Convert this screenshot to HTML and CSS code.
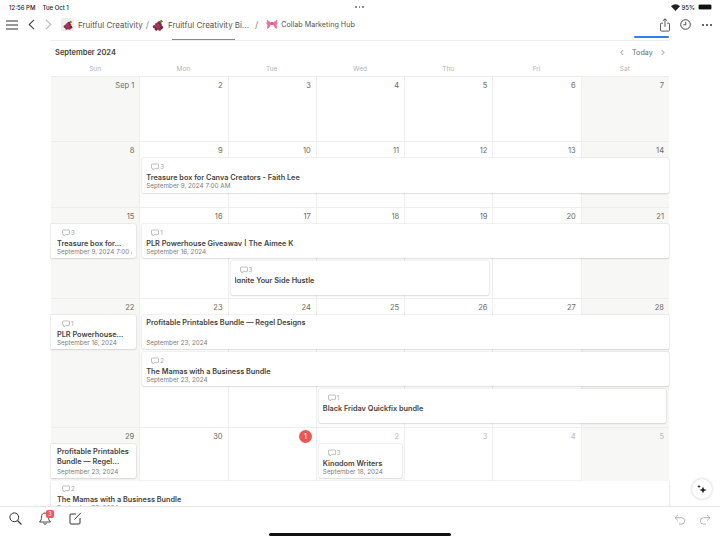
FILE: index.html
```html
<!DOCTYPE html>
<html lang="en">
<head>
    <meta charset="UTF-8">
    <meta name="viewport" content="width=device-width, initial-scale=1.0">
    <title>September 2024 Calendar</title>
    <link rel="stylesheet" href="styles.css">
</head>
<body>
    <svg class="defs" width="0" height="0">
        <symbol id="grapes" viewBox="0 0 14 14">
            <path d="M8 3 L11 1 L13 3 L10 5 Z" fill="#6d8a3c"/>
            <circle cx="8" cy="4.5" r="2" fill="#8e2748"/>
            <circle cx="5.5" cy="6.5" r="2.1" fill="#a52f55"/>
            <circle cx="9.5" cy="7" r="2.2" fill="#8e2748"/>
            <circle cx="3" cy="9" r="2.1" fill="#8e2748"/>
            <circle cx="7" cy="9.5" r="2.2" fill="#a52f55"/>
            <circle cx="11" cy="10" r="2" fill="#7c1f3e"/>
            <circle cx="5" cy="12" r="1.7" fill="#7c1f3e"/>
            <circle cx="9" cy="12" r="1.8" fill="#8e2748"/>
        </symbol>
        <symbol id="comment" viewBox="0 0 8 8">
            <path d="M1.2 1h5.6a.7.7 0 0 1 .7.7v3.2a.7.7 0 0 1-.7.7H3.6L2 7V5.6h-.8a.7.7 0 0 1-.7-.7V1.700a.7.7 0 0 1 .7-.7z" fill="none" stroke="#a5a5a2" stroke-width=".7"/>
        </symbol>
    </svg>

    <div class="status-bar">
        <span class="clock">12:56 PM</span>
        <span>Tue Oct 1</span>
        <span class="status-dots"><i></i><i></i><i></i></span>
        <svg class="wifi" width="9" height="7" viewBox="0 0 9 7"><path d="M0 2.300C2.500-.4 6.500-.4 9 2.300L4.500 7z" fill="#222"/></svg>
        <span>95%</span>
        <span class="battery"><i></i></span>
    </div>

    <nav class="top-bar">
        <svg class="menu-icon" width="12" height="10" viewBox="0 0 12 10"><path d="M0 1h12M0 5h12M0 9h12" stroke="#333" stroke-width="1.1"/></svg>
        <svg class="back-icon" width="7" height="11" viewBox="0 0 7 11"><path d="M6 .8 1.200 5.500 6 10.200" fill="none" stroke="#444" stroke-width="1.100"/></svg>
        <svg class="forward-icon" width="7" height="11" viewBox="0 0 7 11"><path d="M1 .8 5.800 5.500 1 10.200" fill="none" stroke="#bbb" stroke-width="1.100"/></svg>
        <span class="tile"><svg width="10" height="10"><use href="#grapes"/></svg></span>
        <span class="crumb">Fruitful Creativity</span>
        <span class="slash">/</span>
        <svg class="crumb-icon" width="12" height="12"><use href="#grapes"/></svg>
        <span class="crumb">Fruitful Creativity Bi...</span>
        <span class="slash slash-wide">/</span>
        <svg class="bow" width="12" height="11" viewBox="0 0 12 11">
            <path d="M5.500 4 1 .8.500 5l1 1L.8 10l2.400-1.200L5 5.500zM6.500 4 11 .8l.5 4.200-1 1 .7 4-2.400-1.200L7 5.500z" fill="#ee6fa0"/>
            <rect x="4.800" y="3" width="2.400" height="3" rx="1" fill="#d94f86"/>
        </svg>
        <span class="crumb crumb-small">Collab Marketing Hub</span>
        <svg class="share-icon" width="10" height="14" viewBox="0 0 11 15"><path d="M3.200 5.500H1.500a1 1 0 0 0-1 1v6.700a1 1 0 0 0 1 1h8a1 1 0 0 0 1-1V6.500a1 1 0 0 0-1-1H7.800M5.500 9.500V.8M3 3 5.500.6 8 3" fill="none" stroke="#333" stroke-width=".9"/></svg>
        <svg class="history-icon" width="11" height="11" viewBox="0 0 11 11"><circle cx="5.500" cy="5.500" r="4.800" fill="none" stroke="#333" stroke-width=".9"/><path d="M5.800 2.800v3H3.400" fill="none" stroke="#333" stroke-width=".9"/></svg>
        <span class="more-dots"><i></i><i></i><i></i></span>
        <span class="tab-line"></span>
        <span class="sync-line"></span>
    </nav>

    <main class="board">
        <div class="calendar">
            <div class="cal-head">
                <h2>September 2024</h2>
                <div class="cal-nav"><span class="chev">&lsaquo;</span><span>Today</span><span class="chev">&rsaquo;</span></div>
            </div>
            <div class="weekdays">
                <span>Sun</span><span>Mon</span><span>Tue</span><span>Wed</span><span>Thu</span><span>Fri</span><span>Sat</span>
            </div>

            <section class="week week-one">
                <div class="day weekend">Sep 1</div><div class="day">2</div><div class="day">3</div><div class="day">4</div><div class="day">5</div><div class="day">6</div><div class="day weekend">7</div>
            </section>

            <section class="week week-two">
                <div class="day weekend">8</div><div class="day">9</div><div class="day">10</div><div class="day">11</div><div class="day">12</div><div class="day">13</div><div class="day weekend">14</div>
                <article class="card mon-to-sat row-2">
                    <div class="comments"><svg width="8" height="8"><use href="#comment"/></svg>3</div>
                    <h3>Treasure box for Canva Creators - Faith Lee</h3>
                    <p>September 9, 2024 7:00 AM</p>
                </article>
            </section>

            <section class="week week-three">
                <div class="day weekend">15</div><div class="day">16</div><div class="day">17</div><div class="day">18</div><div class="day">19</div><div class="day">20</div><div class="day weekend">21</div>
                <article class="card sun-only row-2">
                    <div class="comments"><svg width="8" height="8"><use href="#comment"/></svg>3</div>
                    <h3>Treasure box for...</h3>
                    <p>September 9, 2024 7:00 AM</p>
                </article>
                <article class="card mon-to-sat row-2">
                    <div class="comments"><svg width="8" height="8"><use href="#comment"/></svg>1</div>
                    <h3>PLR Powerhouse Giveaway | The Aimee K</h3>
                    <p>September 16, 2024</p>
                </article>
                <article class="card tue-to-thu row-4">
                    <div class="comments"><svg width="8" height="8"><use href="#comment"/></svg>3</div>
                    <h3>Ignite Your Side Hustle</h3>
                </article>
            </section>

            <section class="week week-four">
                <div class="day weekend">22</div><div class="day">23</div><div class="day">24</div><div class="day">25</div><div class="day">26</div><div class="day">27</div><div class="day weekend">28</div>
                <article class="card sun-only row-2">
                    <div class="comments"><svg width="8" height="8"><use href="#comment"/></svg>1</div>
                    <h3>PLR Powerhouse...</h3>
                    <p>September 16, 2024</p>
                </article>
                <article class="card mon-to-sat row-2">
                    <h3 class="full-title">Profitable Printables Bundle — Regel Designs</h3>
                    <p class="to-bottom">September 23, 2024</p>
                </article>
                <article class="card mon-to-sat row-4">
                    <div class="comments"><svg width="8" height="8"><use href="#comment"/></svg>2</div>
                    <h3>The Mamas with a Business Bundle</h3>
                    <p>September 23, 2024</p>
                </article>
                <article class="card wed-to-sat row-6">
                    <div class="comments"><svg width="8" height="8"><use href="#comment"/></svg>1</div>
                    <h3>Black Friday Quickfix bundle</h3>
                </article>
            </section>

            <section class="week week-five">
                <div class="day weekend">29</div><div class="day">30</div>
                <div class="day"><span class="today-badge">1</span></div>
                <div class="day muted">2</div><div class="day muted">3</div><div class="day muted">4</div><div class="day weekend muted">5</div>
                <article class="card sun-only row-2">
                    <h3 class="full-title">Profitable Printables Bundle — Regel...</h3>
                    <p class="to-bottom">September 23, 2024</p>
                </article>
                <article class="card wed-only row-2">
                    <div class="comments"><svg width="8" height="8"><use href="#comment"/></svg>3</div>
                    <h3>Kingdom Writers</h3>
                    <p>September 18, 2024</p>
                </article>
            </section>

            <article class="card wide-card">
                <div class="comments"><svg width="8" height="8"><use href="#comment"/></svg>2</div>
                <h3>The Mamas with a Business Bundle</h3>
                <p>September 23, 2024</p>
            </article>
        </div>

        <button class="ai-button" aria-label="Ask AI">
            <svg width="10" height="10" viewBox="0 0 10 10"><path d="M6 2.500 7 5l2.500 1L7 7 6 9.500 5 7 2.500 6 5 5z" fill="#222"/><path d="M2 .6 2.500 2 4 2.500 2.500 3 2 4.400 1.500 3 0 2.500 1.500 2z" fill="#222"/></svg>
        </button>
    </main>

    <footer class="toolbar">
        <svg class="search-icon" width="13" height="13" viewBox="0 0 13 13"><circle cx="5.300" cy="5.300" r="4.400" fill="none" stroke="#333" stroke-width="1"/><path d="M8.500 8.500 12.500 12.500" stroke="#333" stroke-width="1.100"/></svg>
        <span class="bell">
            <svg width="12" height="13" viewBox="0 0 12 13"><path d="M6 1C3.600 1 2.500 2.800 2.500 5c0 2.500-.6 3.700-2 5h11c-1.400-1.300-2-2.500-2-5C9.500 2.800 8.400 1 6 1zM4.500 11.200a1.600 1.600 0 0 0 3 0" fill="none" stroke="#333" stroke-width=".9"/></svg>
            <span class="bell-count">3</span>
        </span>
        <svg class="compose-icon" width="13" height="13" viewBox="0 0 13 13"><path d="M7 2H2a1 1 0 0 0-1 1v8a1 1 0 0 0 1 1h8a1 1 0 0 0 1-1V6M5.500 7.500 11.800.9" fill="none" stroke="#333" stroke-width="1"/></svg>
        <svg class="undo-icon" width="12" height="11" viewBox="0 0 12 11"><path d="M4 .8 1 3.700l3 2.900M1 3.700h6.500a3.200 3.200 0 0 1 0 6.400H5" fill="none" stroke="#aaa" stroke-width=".9"/></svg>
        <svg class="redo-icon" width="12" height="11" viewBox="0 0 12 11"><path d="M8 .8l3 2.900-3 2.900M11 3.700H4.500a3.200 3.200 0 0 0 0 6.400H7" fill="none" stroke="#aaa" stroke-width=".9"/></svg>
        <span class="home-indicator"></span>
    </footer>
</body>
</html>
```

FILE: styles.css
```css
* {
    box-sizing: border-box;
}
html, body {
    margin: 0;
    height: 540px;
    overflow: hidden;
}
body {
    font-family: Inter, "Liberation Sans", sans-serif;
    background-color: white;
    color: #37352f;
    display: flex;
    flex-direction: column;
}
.defs {
    position: absolute;
}

/* Status bar */
.status-bar {
    height: 14px;
    padding: 0 8px 0 9px;
    display: flex;
    align-items: center;
    font-size: 6px;
    font-weight: 500;
    color: #222;
    position: relative;
}
.clock {
    margin-right: 7px;
}
.status-dots {
    position: absolute;
    left: 355px;
    top: 6px;
    display: flex;
    gap: 2px;
}
.status-dots i {
    width: 1.500px;
    height: 1.500px;
    border-radius: 50%;
    background-color: #777;
}
.wifi {
    margin-left: auto;
    margin-right: 2px;
}
.battery {
    width: 14px;
    height: 6px;
    margin-left: 3px;
    border: 1px solid #999;
    border-radius: 2px;
    display: flex;
}
.battery i {
    flex: 1;
    background-color: #111;
}

/* Top nav */
.top-bar {
    height: 26px;
    display: flex;
    align-items: center;
    position: relative;
    padding: 0 0 5px 6px;
    flex: none;
}
.back-icon {
    margin-left: 10px;
}
.forward-icon {
    margin-left: 10px;
}
.tile {
    width: 13px;
    height: 13px;
    margin-left: 9px;
    background-color: #eeeeec;
    border-radius: 2px;
    display: flex;
    align-items: center;
    justify-content: center;
}
.crumb {
    font-size: 8px;
    margin-left: 4px;
    color: #555;
    white-space: nowrap;
}
.crumb-small {
    font-size: 7.200px;
    margin-left: 3px;
}
.slash {
    font-size: 9px;
    margin-left: 3px;
    color: #888;
}
.crumb-icon {
    margin-left: 3px;
}
.slash-wide {
    margin-left: 6px;
}
.bow {
    margin-left: 8px;
}
.share-icon {
    margin-left: auto;
}
.history-icon {
    margin-left: 10px;
}
.more-dots {
    display: flex;
    gap: 2px;
    margin: 0 8px 0 11px;
}
.more-dots i {
    width: 2px;
    height: 2px;
    border-radius: 50%;
    background-color: #333;
}
.tab-line {
    position: absolute;
    left: 172px;
    bottom: -1px;
    width: 63px;
    height: 2px;
    background-color: #8a8983;
}
.sync-line {
    position: absolute;
    left: 634px;
    bottom: 2px;
    width: 35px;
    height: 2px;
    border-radius: 1px;
    background-color: #2f80ed;
}

/* Calendar */
.board {
    flex: 1;
    min-height: 0;
    overflow: hidden;
    position: relative;
}
.calendar {
    width: 618px;
    margin-left: 51px;
    border-top: 1px solid #eeeeec;
}
.cal-head {
    height: 21px;
    display: flex;
    align-items: center;
    justify-content: space-between;
    padding: 2px 4px 0 4px;
}
.cal-head h2 {
    margin: 0;
    font-size: 7.500px;
    font-weight: 600;
    color: #45433e;
}
.cal-nav {
    display: flex;
    align-items: center;
    gap: 8px;
    font-size: 7.200px;
    color: #6b6a65;
}
.chev {
    font-size: 11px;
    color: #aaa;
    line-height: 1;
}
.weekdays {
    display: grid;
    grid-template-columns: repeat(7, minmax(0, 1fr));
    height: 14px;
    padding-top: 3px;
    font-size: 6.500px;
    color: #b5b4b0;
    text-align: center;
}
.week {
    display: grid;
    grid-template-columns: repeat(7, minmax(0, 1fr));
    border-top: 1px solid #eeeeec;
}
.week-one {
    grid-template-rows: 64px;
}
.week-two {
    grid-template-rows: 16px 35px 14px;
}
.week-three {
    grid-template-rows: 16px 34px 3px 34px 3px;
}
.week-four {
    grid-template-rows: 16px 34px 3px 34px 3px 34px 4px;
}
.week-five {
    grid-template-rows: 16px 34px 3px;
}
.day {
    grid-row: 1 / -1;
    border-left: 1px solid #eeeeec;
    padding: 4px 5px 0 0;
    text-align: right;
    font-size: 7.500px;
    line-height: 9px;
    color: #6b6a65;
}
.day:nth-child(1) { grid-column: 1; border-left: none; }
.day:nth-child(2) { grid-column: 2; }
.day:nth-child(3) { grid-column: 3; }
.day:nth-child(4) { grid-column: 4; }
.day:nth-child(5) { grid-column: 5; }
.day:nth-child(6) { grid-column: 6; }
.day:nth-child(7) { grid-column: 7; }
.weekend {
    background-color: #f7f7f5;
}
.muted {
    color: #bdbcb8;
}
.today-badge {
    display: inline-block;
    width: 13px;
    height: 13px;
    border-radius: 50%;
    margin: -2px -1px 0 0;
    background-color: #eb5757;
    color: white;
    text-align: center;
    line-height: 13px;
    font-size: 7px;
}

/* Cards */
.card {
    background-color: white;
    border-radius: 2px;
    box-shadow: 0 0 0 1px rgba(15, 15, 15, 0.05), 0 1px 2px rgba(15, 15, 15, 0.1);
    padding: 3px 4px 2px;
    display: flex;
    flex-direction: column;
    overflow: hidden;
    min-width: 0;
    z-index: 1;
}
.card h3 {
    margin: 0;
    height: 7px;
    flex: none;
    overflow: hidden;
    font-size: 7.300px;
    line-height: 9px;
    font-weight: 600;
    color: #45433e;
    white-space: nowrap;
}
.card h3.full-title {
    height: auto;
    white-space: normal;
    line-height: 10px;
}
.card p {
    margin: 2px 0 0;
    font-size: 6.300px;
    line-height: 8px;
    color: #7d7c78;
    white-space: nowrap;
    overflow: hidden;
}
.card p.to-bottom {
    margin-top: auto;
}
.comments {
    height: 9px;
    margin: 1px 0 2px 5px;
    flex: none;
    display: flex;
    align-items: center;
    gap: 1px;
    font-size: 6px;
    color: #a5a5a2;
}
.row-2 {
    grid-row: 2;
}
.row-4 {
    grid-row: 4;
}
.row-6 {
    grid-row: 6;
}
.sun-only {
    grid-column: 1;
    margin-right: 3px;
    padding-left: 6px;
    padding-right: 4px;
    border-radius: 0 2px 2px 0;
}
.sun-only h3.full-title {
    margin-right: -3px;
}
.mon-to-sat {
    grid-column: 2 / 8;
    margin-left: 3px;
}
.tue-to-thu {
    grid-column: 3 / 6;
    margin: 0 3px;
}
.wed-to-sat {
    grid-column: 4 / 8;
    margin: 0 3px;
}
.wed-only {
    grid-column: 4;
    margin: 0 2px 0 3px;
}
.wide-card {
    height: 40px;
    padding-top: 2px;
    padding-left: 6px;
    border-radius: 0;
}
.ai-button {
    position: absolute;
    left: 692px;
    top: 439px;
    width: 20px;
    height: 20px;
    padding: 0;
    border: none;
    border-radius: 50%;
    background-color: white;
    box-shadow: 0 0 3px rgba(0, 0, 0, 0.25);
    display: flex;
    align-items: center;
    justify-content: center;
}

/* Bottom toolbar */
.toolbar {
    height: 34px;
    flex: none;
    border-top: 1px solid #e6e6e4;
    background-color: white;
    display: flex;
    align-items: flex-start;
    padding: 5px 9px 0 9px;
    position: relative;
}
.bell {
    margin-left: 17px;
    position: relative;
    display: flex;
}
.bell-count {
    position: absolute;
    left: 7px;
    top: -2px;
    width: 8px;
    height: 8px;
    border-radius: 2px;
    background-color: #eb5757;
    color: white;
    font-size: 5.500px;
    line-height: 8px;
    text-align: center;
}
.compose-icon {
    margin-left: 18px;
}
.undo-icon {
    margin-left: auto;
    margin-top: 2px;
}
.redo-icon {
    margin-left: 13px;
    margin-top: 2px;
}
.home-indicator {
    position: absolute;
    left: 269px;
    top: 26px;
    width: 182px;
    height: 3px;
    border-radius: 2px;
    background-color: #111;
}
```
